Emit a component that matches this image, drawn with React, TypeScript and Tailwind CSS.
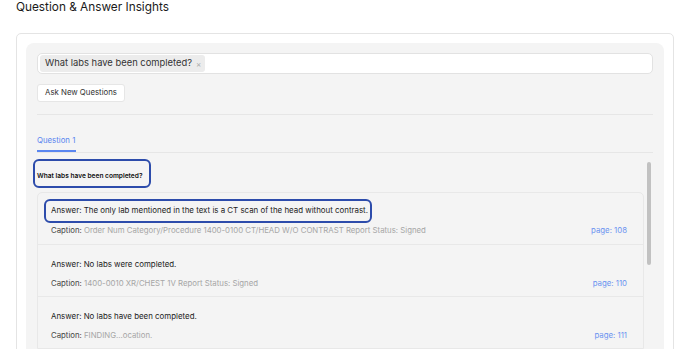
import React from "react";

const items = [
  {
    answer: "Answer: The only lab mentioned in the text is a CT scan of the head without contrast.",
    caption: "Order Num Category/Procedure 1400-0100 CT/HEAD W/O CONTRAST Report Status: Signed",
    page: "page: 108",
    highlight: true,
  },
  {
    answer: "Answer: No labs were completed.",
    caption: "1400-0010 XR/CHEST 1V Report Status: Signed",
    page: "page: 110",
    highlight: false,
  },
  {
    answer: "Answer: No labs have been completed.",
    caption: "FINDING...ocation.",
    page: "page: 111",
    highlight: false,
  },
];

export default function App() {
  return (
    <div
      className="w-[688px] h-[349px] overflow-hidden bg-white text-[#222]"
      style={{ fontFamily: "Inter, 'Open Sans', sans-serif" }}
    >
      <div className="pl-[16px] pt-[0px] text-[11.8px] leading-[15px] text-[#1a1a1a] whitespace-nowrap">
        Question &amp; Answer Insights
      </div>
      <div className="ml-[16px] mt-[18px] w-[658px] h-[400px] rounded-[5px] border border-[#e4e4e4] bg-white pl-[9px] pt-[9px]">
        <div className="w-[638px] h-[400px] rounded-[8px] bg-[#f4f4f4] px-[11px] pt-[10px]">
          <div className="h-[21px] rounded-[5px] border border-[#e2e2e2] bg-white flex items-center px-[2px]">
            <div className="h-[17px] flex items-center rounded-[3px] bg-[#ececec] pl-[5px] pr-[4px] text-[9.4px] text-[#333] whitespace-nowrap">
              What labs have been completed?
              <span className="ml-[4px] text-[8px] text-[#aaa]">×</span>
            </div>
          </div>
          <div className="mt-[10px] flex">
            <div className="h-[18px] w-[88px] flex items-center justify-center rounded-[3px] border border-[#e6e6e6] bg-white text-[7.8px] text-[#333] whitespace-nowrap">
              Ask New Questions
            </div>
          </div>
          <div className="mt-[12px] h-px bg-[#e6e6e6]" />
          <div className="mt-[19px] border-b border-[#e6e6e6] flex">
            <div className="w-[39px] border-b-2 border-[#5a86f0] pb-[4px] text-[7.8px] leading-[12px] text-[#5a86f0] whitespace-nowrap">
              Question 1
            </div>
          </div>
          <div className="mt-[6px] -ml-[4px] flex">
            <div className="flex-1 min-w-0">
              <div className="w-[118px] h-[29px] rounded-[6px] border-2 border-[#2d4cab] flex items-center pl-[2px] pt-[7px] text-[6.6px] font-semibold text-[#111] whitespace-nowrap">
                What labs have been completed?
              </div>
              <div className="ml-[4px] mt-[4px] rounded-t-[5px] border border-[#e8e8e8]">
                {items.map((it, i) => (
                  <div
                    key={i}
                    className={
                      "pl-[13px] pr-[16px] flex flex-col " +
                      (i > 0 ? "h-[52px] border-t border-[#e8e8e8]" : "h-[51px]")
                    }
                  >
                    {it.highlight ? (
                      <div className="-ml-[7px] mt-[6px] w-[328px] h-[24px] rounded-[6px] border-2 border-[#2d4cab] flex items-center pl-[5px] text-[7.9px] text-[#222] whitespace-nowrap">
                        {it.answer}
                      </div>
                    ) : (
                      <div className="mt-[13px] h-[14px] flex items-center text-[7.9px] text-[#222] whitespace-nowrap">
                        {it.answer}
                      </div>
                    )}
                    <div
                      className={
                        "h-[10px] flex items-center justify-between text-[7.8px] whitespace-nowrap " +
                        (it.highlight ? "mt-[3px]" : "mt-[7px]")
                      }
                    >
                      <div>
                        <span className="text-[#444]">Caption: </span>
                        <span className="text-[#a6a6a6]">{it.caption}</span>
                      </div>
                      <div className="text-[#6b93f0]">{it.page}</div>
                    </div>
                  </div>
                ))}
              </div>
            </div>
            <div className="w-[8px] ml-[1px] flex justify-center pt-[3px]">
              <div className="w-[4px] h-[103px] rounded-full bg-[#c1c1c1]" />
            </div>
          </div>
        </div>
      </div>
    </div>
  );
}
